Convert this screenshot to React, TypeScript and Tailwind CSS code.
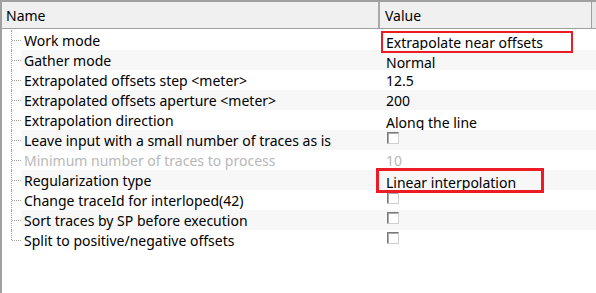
import React from 'react';

type Row = {
  name: string;
  value?: string;
  kind: 'text' | 'combo' | 'check';
  disabled?: boolean;
};

const rows: Row[] = [
  { name: 'Work mode', value: 'Extrapolate near offsets', kind: 'combo' },
  { name: 'Gather mode', value: 'Normal', kind: 'combo' },
  { name: 'Extrapolated offsets step <meter>', value: '12.5', kind: 'text' },
  { name: 'Extrapolated offsets aperture <meter>', value: '200', kind: 'text' },
  { name: 'Extrapolation direction', value: 'Along the line', kind: 'combo' },
  { name: 'Leave input with a small number of traces as is', kind: 'check' },
  { name: 'Minimum number of traces to process', value: '10', kind: 'text', disabled: true },
  { name: 'Regularization type', value: 'Linear interpolation', kind: 'combo' },
  { name: 'Change traceId for interloped(42)', kind: 'check' },
  { name: 'Sort traces by SP before execution', kind: 'check' },
  { name: 'Split to positive/negative offsets', kind: 'check' },
];

const CheckBox = () => (
  <div className="mt-[2px] ml-[1px] h-[12px] w-[12px] border border-t-[#7a7a7a] border-l-[#7a7a7a] border-r-[#d0d0d0] border-b-[#d0d0d0] bg-white shadow-[inset_1px_1px_0_#a8a8a8]" />
);

export default function App() {
  return (
    <div className="relative h-[293px] w-[596px] overflow-hidden border-l-2 border-t-2 border-[#a0a0a0] bg-white font-['Segoe_UI','Noto_Sans',sans-serif] text-[14px] leading-[20px] text-black">
      {/* Header */}
      <div className="flex h-[27px] border-b border-[#a0a0a0] bg-[#f0f0f0]">
        <div className="w-[378px] border-r-2 border-[#a8a8a8] pl-[4px] pt-[4px]">Name</div>
        <div className="w-[212px] border-r border-[#a0a0a0] pl-[5px] pt-[4px]">Value</div>
        <div className="flex-1 bg-[#e8e8e8]" />
      </div>

      {/* Rows */}
      <div className="pt-[1px]">
        {rows.map((r, i) => {
          const last = i === rows.length - 1;
          const shade = i % 2 === 1 ? 'bg-[#f7f7f7]' : 'bg-white';
          return (
            <div key={r.name} className="flex h-[20px]">
              <div className="relative w-[19px] shrink-0">
                <div
                  className={`absolute left-[9px] top-0 w-0 border-l border-dotted border-[#a0a0a0] ${
                    last ? 'h-[10px]' : 'h-[20px]'
                  }`}
                />
                <div className="absolute left-[10px] top-[10px] h-0 w-[9px] border-t border-dotted border-[#a0a0a0]" />
              </div>
              <div className={`flex flex-1 ${shade}`}>
                <div
                  className={`w-[359px] shrink-0 overflow-hidden whitespace-nowrap pl-[3px] pt-[1px] ${
                    r.disabled ? 'text-[#b8b8b8]' : ''
                  }`}
                >
                  {r.name}
                </div>
                <div className="flex-1 overflow-hidden whitespace-nowrap pl-[6px]">
                  {r.kind === 'check' ? (
                    <CheckBox />
                  ) : r.kind === 'combo' ? (
                    <div className="h-[20px] overflow-hidden pt-[3px] leading-[20px]">{r.value}</div>
                  ) : (
                    <div className={`pt-[1px] ${r.disabled ? 'text-[#b8b8b8]' : ''}`}>{r.value}</div>
                  )}
                </div>
              </div>
            </div>
          );
        })}
      </div>

      {/* Red annotation boxes */}
      <div className="absolute left-[379px] top-[29px] h-[22px] w-[192px] border-2 border-[#ed1c24]" />
      <div className="absolute left-[374px] top-[166px] h-[25px] w-[168px] border-[3px] border-[#ed1c24]" />
    </div>
  );
}
